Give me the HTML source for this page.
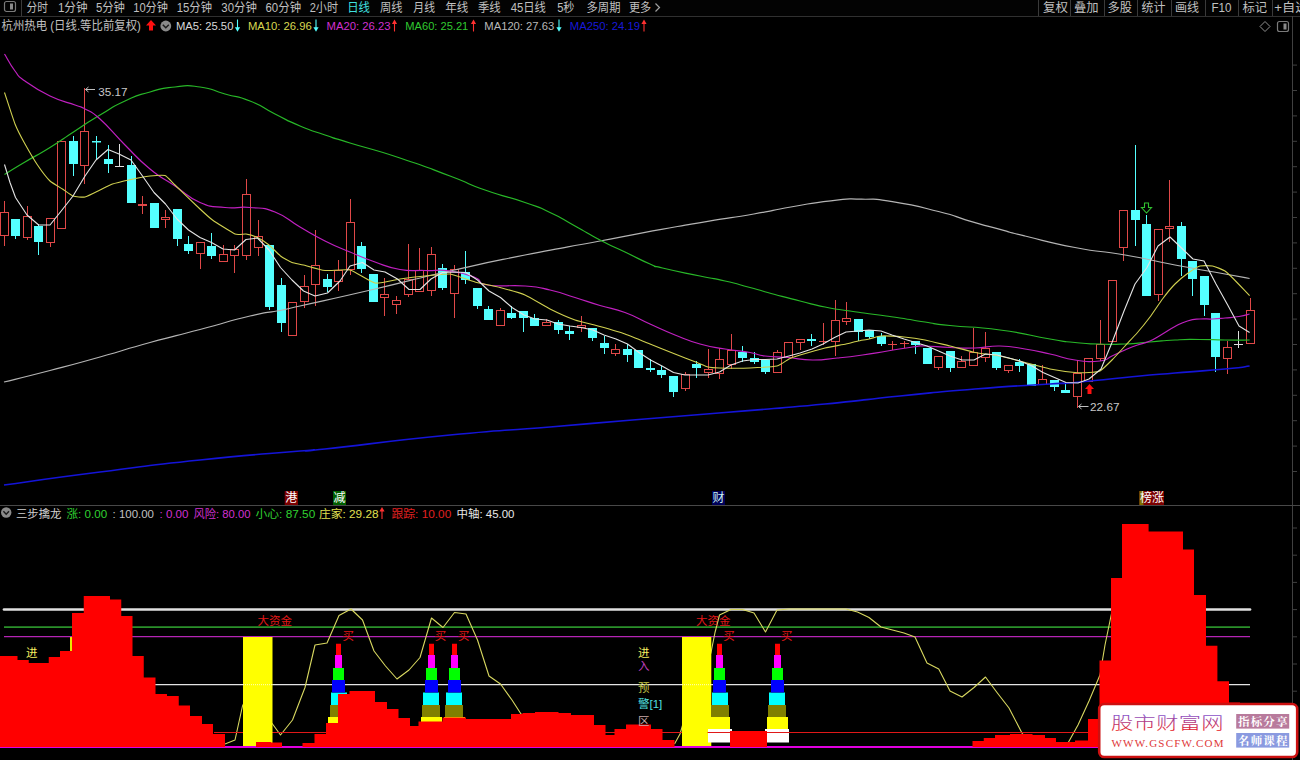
<!DOCTYPE html>
<html lang="zh-CN"><head><meta charset="utf-8"><title>杭州热电 日线</title>
<style>html,body{margin:0;padding:0;background:#000;overflow:hidden}svg{display:block}text{font-family:"Liberation Sans","Noto Sans CJK SC",sans-serif;white-space:pre}</style></head><body>
<svg width="1300" height="760" viewBox="0 0 1300 760">
<defs><linearGradient id="wg" x1="0" y1="0" x2="0" y2="1"><stop offset="0.15" stop-color="#7f58dc"/><stop offset="0.9" stop-color="#ee1414"/></linearGradient></defs>
<rect width="1300" height="760" fill="#000"/>
<rect x="0" y="0" width="1300" height="16" fill="#030303"/>
<path d="M0 16.5H1300" stroke="#303030" stroke-width="1"/>
<path d="M21.5 0V16" stroke="#3a3a3a" stroke-width="1"/>
<rect x="4.5" y="1.5" width="11" height="10" rx="2" fill="none" stroke="#7a7a7a" stroke-width="1.2"/><rect x="10" y="3.5" width="3" height="6" fill="#8a8a8a"/>
<text x="26.5" y="11.7" fill="#c0c0c0" font-size="12"  textLength="21.4" lengthAdjust="spacingAndGlyphs">分时</text>
<text x="57.9" y="11.7" fill="#c0c0c0" font-size="12"  textLength="29.6" lengthAdjust="spacingAndGlyphs">1分钟</text>
<text x="95.9" y="11.7" fill="#c0c0c0" font-size="12"  textLength="29.0" lengthAdjust="spacingAndGlyphs">5分钟</text>
<text x="133.2" y="11.7" fill="#c0c0c0" font-size="12"  textLength="34.8" lengthAdjust="spacingAndGlyphs">10分钟</text>
<text x="176.8" y="11.7" fill="#c0c0c0" font-size="12"  textLength="35.2" lengthAdjust="spacingAndGlyphs">15分钟</text>
<text x="221.3" y="11.7" fill="#c0c0c0" font-size="12"  textLength="35.5" lengthAdjust="spacingAndGlyphs">30分钟</text>
<text x="265.5" y="11.7" fill="#c0c0c0" font-size="12"  textLength="35.6" lengthAdjust="spacingAndGlyphs">60分钟</text>
<text x="309.7" y="11.7" fill="#c0c0c0" font-size="12"  textLength="28.3" lengthAdjust="spacingAndGlyphs">2小时</text>
<text x="347.2" y="11.7" fill="#40e0e0" font-size="12"  textLength="22.8" lengthAdjust="spacingAndGlyphs">日线</text>
<text x="380.0" y="11.7" fill="#c0c0c0" font-size="12"  textLength="22.5" lengthAdjust="spacingAndGlyphs">周线</text>
<text x="413.3" y="11.7" fill="#c0c0c0" font-size="12"  textLength="21.7" lengthAdjust="spacingAndGlyphs">月线</text>
<text x="445.2" y="11.7" fill="#c0c0c0" font-size="12"  textLength="23.1" lengthAdjust="spacingAndGlyphs">年线</text>
<text x="477.9" y="11.7" fill="#c0c0c0" font-size="12"  textLength="22.8" lengthAdjust="spacingAndGlyphs">季线</text>
<text x="510.7" y="11.7" fill="#c0c0c0" font-size="12"  textLength="35.2" lengthAdjust="spacingAndGlyphs">45日线</text>
<text x="557.2" y="11.7" fill="#c0c0c0" font-size="12"  textLength="17.3" lengthAdjust="spacingAndGlyphs">5秒</text>
<text x="586.5" y="11.7" fill="#c0c0c0" font-size="12"  textLength="34.0" lengthAdjust="spacingAndGlyphs">多周期</text>
<text x="628.9" y="11.7" fill="#c0c0c0" font-size="12"  textLength="22.2" lengthAdjust="spacingAndGlyphs">更多</text>
<path d="M655.5 3.5L659.5 7.5L655.5 11.5" fill="none" stroke="#a0a0a0" stroke-width="1.2"/>
<text x="1042.9" y="11.7" fill="#c0c0c0" font-size="12"  textLength="25.0" lengthAdjust="spacingAndGlyphs">复权</text>
<text x="1073.9" y="11.7" fill="#c0c0c0" font-size="12"  textLength="24.6" lengthAdjust="spacingAndGlyphs">叠加</text>
<text x="1107.5" y="11.7" fill="#c0c0c0" font-size="12"  textLength="24.6" lengthAdjust="spacingAndGlyphs">多股</text>
<text x="1141.5" y="11.7" fill="#c0c0c0" font-size="12"  textLength="24.0" lengthAdjust="spacingAndGlyphs">统计</text>
<text x="1175.0" y="11.7" fill="#c0c0c0" font-size="12"  textLength="24.1" lengthAdjust="spacingAndGlyphs">画线</text>
<text x="1211.5" y="11.7" fill="#c0c0c0" font-size="12"  textLength="20.0" lengthAdjust="spacingAndGlyphs">F10</text>
<text x="1242.5" y="11.7" fill="#c0c0c0" font-size="12"  textLength="24.7" lengthAdjust="spacingAndGlyphs">标记</text>
<text x="1274.3" y="11.7" fill="#c0c0c0" font-size="12"  textLength="34.2" lengthAdjust="spacingAndGlyphs">+自选</text>
<path d="M1038.5 0V16" stroke="#3a3a3a" stroke-width="1"/>
<path d="M1070.5 0V16" stroke="#3a3a3a" stroke-width="1"/>
<path d="M1104.5 0V16" stroke="#3a3a3a" stroke-width="1"/>
<path d="M1137.5 0V16" stroke="#3a3a3a" stroke-width="1"/>
<path d="M1171.5 0V16" stroke="#3a3a3a" stroke-width="1"/>
<path d="M1205.5 0V16" stroke="#3a3a3a" stroke-width="1"/>
<path d="M1238.5 0V16" stroke="#3a3a3a" stroke-width="1"/>
<path d="M1272.5 0V16" stroke="#3a3a3a" stroke-width="1"/>
<text x="1.5" y="30.4" fill="#c0c0c0" font-size="12"  textLength="139.4" lengthAdjust="spacingAndGlyphs">杭州热电 (日线.等比前复权)</text>
<path d="M151 20L156 25.5H153V30.5H149V25.5H146Z" fill="#ff1010"/>
<circle cx="165.8" cy="26" r="5.4" fill="#8a8a8a"/><path d="M162.8 24.8L165.8 27.8L168.8 24.8" fill="none" stroke="#1a1a1a" stroke-width="1.4"/>
<text x="175.9" y="29.5" fill="#d8d8d8" font-size="11.5"  textLength="57.5" lengthAdjust="spacingAndGlyphs">MA5: 25.50</text>
<path d="M237.5 19.5V29" fill="none" stroke="#54ffff" stroke-width="1.1"/><path d="M234.9 27.3H240.1L237.5 31.8Z" fill="#54ffff"/>
<text x="247.9" y="29.5" fill="#d8d850" font-size="11.5"  textLength="63.9" lengthAdjust="spacingAndGlyphs">MA10: 26.96</text>
<path d="M316 19.5V29" fill="none" stroke="#54ffff" stroke-width="1.1"/><path d="M313.4 27.3H318.6L316 31.8Z" fill="#54ffff"/>
<text x="326.5" y="29.5" fill="#d030d0" font-size="11.5"  textLength="64.0" lengthAdjust="spacingAndGlyphs">MA20: 26.23</text>
<path d="M394.5 31.5V22" fill="none" stroke="#ff3030" stroke-width="1.1"/><path d="M391.9 24H397.1L394.5 19.5Z" fill="#ff3030"/>
<text x="405.3" y="29.5" fill="#30c830" font-size="11.5"  textLength="63.0" lengthAdjust="spacingAndGlyphs">MA60: 25.21</text>
<path d="M473.5 31.5V22" fill="none" stroke="#ff3030" stroke-width="1.1"/><path d="M470.9 24H476.1L473.5 19.5Z" fill="#ff3030"/>
<text x="484.3" y="29.5" fill="#b8b8b8" font-size="11.5"  textLength="69.9" lengthAdjust="spacingAndGlyphs">MA120: 27.63</text>
<path d="M559 19.5V29" fill="none" stroke="#54ffff" stroke-width="1.1"/><path d="M556.4 27.3H561.6L559 31.8Z" fill="#54ffff"/>
<text x="569.8" y="29.5" fill="#1818d8" font-size="11.5"  textLength="70.2" lengthAdjust="spacingAndGlyphs">MA250: 24.19</text>
<path d="M644 31.5V22" fill="none" stroke="#ff3030" stroke-width="1.1"/><path d="M641.4 24H646.6L644 19.5Z" fill="#ff3030"/>
<path d="M1265 21.5L1270 26.5L1265 31.5L1260 26.5Z" fill="none" stroke="#909090" stroke-width="1"/>
<rect x="1277.5" y="21.5" width="11" height="10" rx="2" fill="none" stroke="#7a7a7a" stroke-width="1.2"/><rect x="1283.5" y="23.5" width="3" height="6" fill="#8a8a8a"/>
<path d="M1292.5 16V760" stroke="#404040" stroke-width="1"/>
<path d="M1292 65.1H1297M1292 90.5H1297M1292 115.9H1297M1292 141.3H1297M1292 166.7H1297M1292 192.1H1297M1292 217.5H1297M1292 242.9H1297M1292 268.3H1297M1292 293.7H1297M1292 319.1H1297M1292 344.5H1297M1292 369.9H1297M1292 395.3H1297M1292 420.7H1297M1292 446.1H1297M1292 471.5H1297M1292 528.0H1297M1292 555.2H1297M1292 582.4H1297M1292 609.6H1297M1292 636.8H1297M1292 664.0H1297M1292 691.2H1297M1292 718.4H1297M1292 745.6H1297" stroke="#404040" stroke-width="1"/>
<path d="M0 505.5H1300" stroke="#484848" stroke-width="1"/>
<path d="M4.5 201V212M4.5 236V246" stroke="#e04848" stroke-width="1"/>
<rect x="0.5" y="212.5" width="8" height="23" fill="#000" stroke="#e04848" stroke-width="1"/>
<path d="M15.5 219V239" stroke="#54ffff" stroke-width="1"/>
<rect x="11" y="219" width="9" height="17" fill="#54ffff"/>
<path d="M27.5 206V216M27.5 238V240" stroke="#e04848" stroke-width="1"/>
<rect x="23.5" y="216.5" width="8" height="21" fill="#000" stroke="#e04848" stroke-width="1"/>
<path d="M38.5 224V255" stroke="#54ffff" stroke-width="1"/>
<rect x="34" y="226" width="9" height="16" fill="#54ffff"/>
<path d="M50.5 243V247" stroke="#e04848" stroke-width="1"/>
<rect x="46.5" y="218.5" width="8" height="24" fill="#000" stroke="#e04848" stroke-width="1"/>
<rect x="57.5" y="141.5" width="8" height="87" fill="#000" stroke="#e04848" stroke-width="1"/>
<path d="M73.5 136V176" stroke="#54ffff" stroke-width="1"/>
<rect x="69" y="141" width="9" height="23" fill="#54ffff"/>
<path d="M84.5 88V131M84.5 166V184" stroke="#e04848" stroke-width="1"/>
<rect x="80.5" y="131.5" width="8" height="34" fill="#000" stroke="#e04848" stroke-width="1"/>
<path d="M96.5 136V159" stroke="#54ffff" stroke-width="1"/>
<rect x="92" y="141" width="9" height="1.5" fill="#54ffff"/>
<path d="M108.5 145V173" stroke="#54ffff" stroke-width="1"/>
<rect x="104" y="159" width="9" height="5" fill="#54ffff"/>
<path d="M119.5 144V166M115 166.5H124" stroke="#e0e0e0" stroke-width="1" fill="none"/>
<path d="M131.5 156V203" stroke="#54ffff" stroke-width="1"/>
<rect x="127" y="165" width="9" height="38" fill="#54ffff"/>
<path d="M142.5 196V204M142.5 206V214" stroke="#e04848" stroke-width="1"/>
<rect x="138.5" y="204.5" width="8" height="1" fill="#000" stroke="#e04848" stroke-width="1"/>
<path d="M154.5 203V228" stroke="#54ffff" stroke-width="1"/>
<rect x="150" y="203" width="9" height="25" fill="#54ffff"/>
<path d="M165.5 210V217M165.5 220V228" stroke="#e04848" stroke-width="1"/>
<rect x="161.5" y="217.5" width="8" height="2" fill="#000" stroke="#e04848" stroke-width="1"/>
<path d="M177.5 209V246" stroke="#54ffff" stroke-width="1"/>
<rect x="173" y="209" width="9" height="30" fill="#54ffff"/>
<path d="M188.5 236V254" stroke="#54ffff" stroke-width="1"/>
<rect x="184" y="244" width="9" height="7" fill="#54ffff"/>
<path d="M200.5 254V269" stroke="#e04848" stroke-width="1"/>
<rect x="196.5" y="242.5" width="8" height="11" fill="#000" stroke="#e04848" stroke-width="1"/>
<path d="M211.5 233V259" stroke="#54ffff" stroke-width="1"/>
<rect x="207" y="246" width="9" height="10" fill="#54ffff"/>
<path d="M223.5 245V254" stroke="#e04848" stroke-width="1"/>
<rect x="219.5" y="254.5" width="8" height="7" fill="#000" stroke="#e04848" stroke-width="1"/>
<path d="M234.5 245V249M234.5 256V273" stroke="#e04848" stroke-width="1"/>
<rect x="230.5" y="249.5" width="8" height="6" fill="#000" stroke="#e04848" stroke-width="1"/>
<path d="M246.5 179V194M246.5 256V260" stroke="#e04848" stroke-width="1"/>
<rect x="242.5" y="194.5" width="8" height="61" fill="#000" stroke="#e04848" stroke-width="1"/>
<path d="M258.5 220V236M258.5 248V256" stroke="#e04848" stroke-width="1"/>
<rect x="254.5" y="236.5" width="8" height="11" fill="#000" stroke="#e04848" stroke-width="1"/>
<path d="M269.5 245V310" stroke="#54ffff" stroke-width="1"/>
<rect x="265" y="245" width="9" height="62" fill="#54ffff"/>
<path d="M281.5 278V332" stroke="#54ffff" stroke-width="1"/>
<rect x="277" y="285" width="9" height="38" fill="#54ffff"/>
<rect x="288.5" y="302.5" width="8" height="33" fill="#000" stroke="#e04848" stroke-width="1"/>
<path d="M304.5 275V286M304.5 302V308" stroke="#e04848" stroke-width="1"/>
<rect x="300.5" y="286.5" width="8" height="15" fill="#000" stroke="#e04848" stroke-width="1"/>
<path d="M315.5 230V265M315.5 285V306" stroke="#e04848" stroke-width="1"/>
<rect x="311.5" y="265.5" width="8" height="19" fill="#000" stroke="#e04848" stroke-width="1"/>
<path d="M327.5 274V292" stroke="#54ffff" stroke-width="1"/>
<rect x="323" y="279" width="9" height="8" fill="#54ffff"/>
<path d="M338.5 260V270M338.5 282V291" stroke="#e04848" stroke-width="1"/>
<rect x="334.5" y="270.5" width="8" height="11" fill="#000" stroke="#e04848" stroke-width="1"/>
<path d="M350.5 199V222M350.5 270V275" stroke="#e04848" stroke-width="1"/>
<rect x="346.5" y="222.5" width="8" height="47" fill="#000" stroke="#e04848" stroke-width="1"/>
<path d="M361.5 242V273" stroke="#54ffff" stroke-width="1"/>
<rect x="357" y="246" width="9" height="23" fill="#54ffff"/>
<path d="M373.5 274V302" stroke="#54ffff" stroke-width="1"/>
<rect x="369" y="274" width="9" height="28" fill="#54ffff"/>
<path d="M384.5 278V294M384.5 298V316" stroke="#e04848" stroke-width="1"/>
<rect x="380.5" y="294.5" width="8" height="3" fill="#000" stroke="#e04848" stroke-width="1"/>
<path d="M396.5 296V300M396.5 305V314" stroke="#e04848" stroke-width="1"/>
<rect x="392.5" y="300.5" width="8" height="4" fill="#000" stroke="#e04848" stroke-width="1"/>
<path d="M408.5 244V279M408.5 295V297" stroke="#e04848" stroke-width="1"/>
<rect x="404.5" y="279.5" width="8" height="15" fill="#000" stroke="#e04848" stroke-width="1"/>
<path d="M419.5 248V270" stroke="#e04848" stroke-width="1"/>
<rect x="415.5" y="270.5" width="8" height="21" fill="#000" stroke="#e04848" stroke-width="1"/>
<path d="M431.5 247V254M431.5 291V296" stroke="#e04848" stroke-width="1"/>
<rect x="427.5" y="254.5" width="8" height="36" fill="#000" stroke="#e04848" stroke-width="1"/>
<path d="M442.5 264V290" stroke="#54ffff" stroke-width="1"/>
<rect x="438" y="268" width="9" height="20" fill="#54ffff"/>
<path d="M454.5 265V269M454.5 294V318" stroke="#e04848" stroke-width="1"/>
<rect x="450.5" y="269.5" width="8" height="24" fill="#000" stroke="#e04848" stroke-width="1"/>
<path d="M465.5 251V284" stroke="#54ffff" stroke-width="1"/>
<rect x="461" y="272" width="9" height="8" fill="#54ffff"/>
<path d="M477.5 288V309" stroke="#54ffff" stroke-width="1"/>
<rect x="473" y="288" width="9" height="18" fill="#54ffff"/>
<path d="M488.5 306V320" stroke="#54ffff" stroke-width="1"/>
<rect x="484" y="309" width="9" height="11" fill="#54ffff"/>
<path d="M500.5 308V310" stroke="#e04848" stroke-width="1"/>
<rect x="496.5" y="310.5" width="8" height="15" fill="#000" stroke="#e04848" stroke-width="1"/>
<path d="M511.5 306V319" stroke="#54ffff" stroke-width="1"/>
<rect x="507" y="313" width="9" height="5" fill="#54ffff"/>
<path d="M523.5 311V332" stroke="#54ffff" stroke-width="1"/>
<rect x="519" y="311" width="9" height="7" fill="#54ffff"/>
<path d="M534.5 314V326" stroke="#54ffff" stroke-width="1"/>
<rect x="530" y="318" width="9" height="8" fill="#54ffff"/>
<path d="M546.5 319V322" stroke="#e04848" stroke-width="1"/>
<rect x="542.5" y="322.5" width="8" height="3" fill="#000" stroke="#e04848" stroke-width="1"/>
<path d="M558.5 320V334" stroke="#54ffff" stroke-width="1"/>
<rect x="554" y="322" width="9" height="8" fill="#54ffff"/>
<path d="M569.5 326V340" stroke="#54ffff" stroke-width="1"/>
<rect x="565" y="331" width="9" height="3" fill="#54ffff"/>
<path d="M581.5 316V325M581.5 328V332" stroke="#e04848" stroke-width="1"/>
<rect x="577.5" y="325.5" width="8" height="2" fill="#000" stroke="#e04848" stroke-width="1"/>
<path d="M592.5 328V341" stroke="#54ffff" stroke-width="1"/>
<rect x="588" y="328" width="9" height="10" fill="#54ffff"/>
<path d="M604.5 336V354" stroke="#54ffff" stroke-width="1"/>
<rect x="600" y="343" width="9" height="5" fill="#54ffff"/>
<path d="M615.5 344V349M615.5 354V356" stroke="#e04848" stroke-width="1"/>
<rect x="611.5" y="349.5" width="8" height="4" fill="#000" stroke="#e04848" stroke-width="1"/>
<path d="M627.5 344V362" stroke="#54ffff" stroke-width="1"/>
<rect x="623" y="349" width="9" height="6" fill="#54ffff"/>
<path d="M638.5 350V368" stroke="#54ffff" stroke-width="1"/>
<rect x="634" y="350" width="9" height="18" fill="#54ffff"/>
<path d="M650.5 359V372" stroke="#54ffff" stroke-width="1"/>
<rect x="646" y="368" width="9" height="2" fill="#54ffff"/>
<path d="M661.5 366V378" stroke="#54ffff" stroke-width="1"/>
<rect x="657" y="370" width="9" height="5" fill="#54ffff"/>
<path d="M673.5 376V397" stroke="#54ffff" stroke-width="1"/>
<rect x="669" y="376" width="9" height="16" fill="#54ffff"/>
<path d="M685.5 372V374M685.5 389V391" stroke="#e04848" stroke-width="1"/>
<rect x="681.5" y="374.5" width="8" height="14" fill="#000" stroke="#e04848" stroke-width="1"/>
<path d="M696.5 361V378" stroke="#54ffff" stroke-width="1"/>
<rect x="692" y="364" width="9" height="4" fill="#54ffff"/>
<path d="M708.5 349V369M708.5 373V378" stroke="#e04848" stroke-width="1"/>
<rect x="704.5" y="369.5" width="8" height="3" fill="#000" stroke="#e04848" stroke-width="1"/>
<path d="M719.5 348V359M719.5 374V379" stroke="#e04848" stroke-width="1"/>
<rect x="715.5" y="359.5" width="8" height="14" fill="#000" stroke="#e04848" stroke-width="1"/>
<path d="M731.5 334V350M731.5 365V369" stroke="#e04848" stroke-width="1"/>
<rect x="727.5" y="350.5" width="8" height="14" fill="#000" stroke="#e04848" stroke-width="1"/>
<path d="M742.5 346V362" stroke="#54ffff" stroke-width="1"/>
<rect x="738" y="352" width="9" height="6" fill="#54ffff"/>
<path d="M754.5 352V364" stroke="#54ffff" stroke-width="1"/>
<rect x="750" y="358" width="9" height="4" fill="#54ffff"/>
<path d="M765.5 360V374" stroke="#54ffff" stroke-width="1"/>
<rect x="761" y="360" width="9" height="12" fill="#54ffff"/>
<path d="M777.5 350V352" stroke="#e04848" stroke-width="1"/>
<rect x="773.5" y="352.5" width="8" height="20" fill="#000" stroke="#e04848" stroke-width="1"/>
<rect x="784.5" y="342.5" width="8" height="15" fill="#000" stroke="#e04848" stroke-width="1"/>
<path d="M800.5 343V350" stroke="#e04848" stroke-width="1"/>
<rect x="796.5" y="339.5" width="8" height="3" fill="#000" stroke="#e04848" stroke-width="1"/>
<path d="M811.5 334V346" stroke="#54ffff" stroke-width="1"/>
<rect x="807" y="339" width="9" height="2" fill="#54ffff"/>
<path d="M823.5 323V345M819 341.5H828" stroke="#e04848" stroke-width="1" fill="none"/>
<path d="M835.5 300V320M835.5 342V356" stroke="#e04848" stroke-width="1"/>
<rect x="831.5" y="320.5" width="8" height="21" fill="#000" stroke="#e04848" stroke-width="1"/>
<path d="M846.5 302V318M846.5 322V325" stroke="#e04848" stroke-width="1"/>
<rect x="842.5" y="318.5" width="8" height="3" fill="#000" stroke="#e04848" stroke-width="1"/>
<path d="M858.5 319V341" stroke="#54ffff" stroke-width="1"/>
<rect x="854" y="319" width="9" height="13" fill="#54ffff"/>
<path d="M869.5 330V339" stroke="#54ffff" stroke-width="1"/>
<rect x="865" y="330" width="9" height="7" fill="#54ffff"/>
<path d="M881.5 333V346" stroke="#54ffff" stroke-width="1"/>
<rect x="877" y="336" width="9" height="8" fill="#54ffff"/>
<path d="M892.5 341V350M888 344.5H897" stroke="#e04848" stroke-width="1" fill="none"/>
<path d="M904.5 341V348M900 343.5H909" stroke="#e04848" stroke-width="1" fill="none"/>
<path d="M915.5 341V354" stroke="#54ffff" stroke-width="1"/>
<rect x="911" y="341" width="9" height="4" fill="#54ffff"/>
<path d="M927.5 348V364" stroke="#54ffff" stroke-width="1"/>
<rect x="923" y="348" width="9" height="16" fill="#54ffff"/>
<path d="M938.5 368V370" stroke="#e04848" stroke-width="1"/>
<rect x="934.5" y="356.5" width="8" height="11" fill="#000" stroke="#e04848" stroke-width="1"/>
<path d="M950.5 351V372" stroke="#54ffff" stroke-width="1"/>
<rect x="946" y="351" width="9" height="17" fill="#54ffff"/>
<path d="M961.5 356V361" stroke="#e04848" stroke-width="1"/>
<rect x="957.5" y="361.5" width="8" height="6" fill="#000" stroke="#e04848" stroke-width="1"/>
<path d="M973.5 328V352" stroke="#e04848" stroke-width="1"/>
<rect x="969.5" y="352.5" width="8" height="13" fill="#000" stroke="#e04848" stroke-width="1"/>
<path d="M985.5 332V348M985.5 358V362" stroke="#e04848" stroke-width="1"/>
<rect x="981.5" y="348.5" width="8" height="9" fill="#000" stroke="#e04848" stroke-width="1"/>
<path d="M996.5 352V370" stroke="#54ffff" stroke-width="1"/>
<rect x="992" y="352" width="9" height="16" fill="#54ffff"/>
<path d="M1008.5 371V373" stroke="#e04848" stroke-width="1"/>
<rect x="1004.5" y="365.5" width="8" height="5" fill="#000" stroke="#e04848" stroke-width="1"/>
<path d="M1019.5 359V372" stroke="#54ffff" stroke-width="1"/>
<rect x="1015" y="362" width="9" height="4" fill="#54ffff"/>
<path d="M1031.5 364V386" stroke="#54ffff" stroke-width="1"/>
<rect x="1027" y="364" width="9" height="22" fill="#54ffff"/>
<path d="M1042.5 365V379" stroke="#e04848" stroke-width="1"/>
<rect x="1038.5" y="379.5" width="8" height="5" fill="#000" stroke="#e04848" stroke-width="1"/>
<path d="M1054.5 380V391" stroke="#54ffff" stroke-width="1"/>
<rect x="1050" y="380" width="9" height="7" fill="#54ffff"/>
<path d="M1065.5 384V393" stroke="#54ffff" stroke-width="1"/>
<rect x="1061" y="390" width="9" height="3" fill="#54ffff"/>
<path d="M1077.5 360V373M1077.5 397V408" stroke="#e04848" stroke-width="1"/>
<rect x="1073.5" y="373.5" width="8" height="23" fill="#000" stroke="#e04848" stroke-width="1"/>
<rect x="1084.5" y="358.5" width="8" height="23" fill="#000" stroke="#e04848" stroke-width="1"/>
<path d="M1100.5 320V344M1100.5 359V361" stroke="#e04848" stroke-width="1"/>
<rect x="1096.5" y="344.5" width="8" height="14" fill="#000" stroke="#e04848" stroke-width="1"/>
<rect x="1108.5" y="280.5" width="8" height="61" fill="#000" stroke="#e04848" stroke-width="1"/>
<path d="M1123.5 248V261" stroke="#e04848" stroke-width="1"/>
<rect x="1119.5" y="210.5" width="8" height="37" fill="#000" stroke="#e04848" stroke-width="1"/>
<path d="M1135.5 145V246" stroke="#54ffff" stroke-width="1"/>
<rect x="1131" y="210" width="9" height="10" fill="#54ffff"/>
<path d="M1146.5 215V296" stroke="#54ffff" stroke-width="1"/>
<rect x="1142" y="224" width="9" height="72" fill="#54ffff"/>
<path d="M1158.5 295V301" stroke="#e04848" stroke-width="1"/>
<rect x="1154.5" y="229.5" width="8" height="65" fill="#000" stroke="#e04848" stroke-width="1"/>
<path d="M1169.5 180V226M1169.5 229V242" stroke="#e04848" stroke-width="1"/>
<rect x="1165.5" y="226.5" width="8" height="2" fill="#000" stroke="#e04848" stroke-width="1"/>
<path d="M1181.5 222V276" stroke="#54ffff" stroke-width="1"/>
<rect x="1177" y="226" width="9" height="33" fill="#54ffff"/>
<path d="M1192.5 261V296" stroke="#54ffff" stroke-width="1"/>
<rect x="1188" y="261" width="9" height="18" fill="#54ffff"/>
<path d="M1204.5 276V316" stroke="#54ffff" stroke-width="1"/>
<rect x="1200" y="276" width="9" height="29" fill="#54ffff"/>
<path d="M1215.5 313V372" stroke="#54ffff" stroke-width="1"/>
<rect x="1211" y="313" width="9" height="44" fill="#54ffff"/>
<path d="M1227.5 341V347M1227.5 359V374" stroke="#e04848" stroke-width="1"/>
<rect x="1223.5" y="347.5" width="8" height="11" fill="#000" stroke="#e04848" stroke-width="1"/>
<path d="M1238.5 331V348M1234 344.5H1243" stroke="#e0e0e0" stroke-width="1" fill="none"/>
<path d="M1250.5 298V310" stroke="#e04848" stroke-width="1"/>
<rect x="1246.5" y="310.5" width="8" height="33" fill="#000" stroke="#e04848" stroke-width="1"/>
<path d="M4 485C36.0 480.7 34.7 480.3 100 472C165.3 463.7 133.3 467.0 200 460C266.7 453.0 258.3 454.7 300 451C341.7 447.3 275.0 454.3 325 449C375.0 443.7 375.0 442.3 450 435C525.0 427.7 489.2 432.0 550 427C610.8 422.0 574.2 424.8 632.5 420C690.8 415.2 660.8 417.8 725 412.5C789.2 407.2 766.7 409.5 825 404C883.3 398.5 850.0 401.0 900 396C950.0 391.0 925.0 393.0 975 389C1025.0 385.0 1016.7 386.2 1050 384C1083.3 381.8 1050.0 384.7 1075 382.5C1100.0 380.3 1091.7 380.7 1125 377.5C1158.3 374.3 1141.7 375.8 1175 373C1208.3 370.2 1200.1 371.3 1225 369C1249.9 366.7 1241.4 367.0 1249.6 366" fill="none" stroke="#1414d8" stroke-width="1.6" stroke-linejoin="round"/>
<path d="M4 382C19.3 378.2 18.0 378.8 50 370.5C82.0 362.2 66.7 366.3 100 357C133.3 347.7 116.7 351.7 150 342.5C183.3 333.3 166.7 338.3 200 329.5C233.3 320.7 223.3 322.3 250 316C276.7 309.7 263.3 313.8 280 310.5C296.7 307.2 268.3 313.2 300 306C331.7 298.8 325.0 300.7 375 289C425.0 277.3 400.0 282.3 450 271C500.0 259.7 475.0 265.0 525 255C575.0 245.0 554.5 249.5 600 241C645.5 232.5 625.6 235.9 661.5 229.4C697.4 222.9 676.9 226.5 707.7 221.4C738.5 216.3 726.1 218.8 753.8 214C781.5 209.2 765.1 211.4 790.8 207C816.5 202.6 807.2 203.4 830.8 200.8C854.4 198.2 841.0 198.9 861.5 199.2C882.0 199.5 866.6 197.6 892.3 201.7C918.0 205.8 912.9 205.1 938.5 211.5C964.1 217.9 948.5 214.8 969 220.8C989.5 226.8 981.3 224.3 1000 229.4C1018.7 234.5 1000.0 230.0 1025 236C1050.0 242.0 1041.7 241.2 1075 247.5C1108.3 253.8 1091.7 249.2 1125 255C1158.3 260.8 1141.7 258.7 1175 265C1208.3 271.3 1200.1 269.5 1225 274C1249.9 278.5 1241.4 277.0 1249.6 278.5" fill="none" stroke="#b4b4b4" stroke-width="1.2" stroke-linejoin="round"/>
<path d="M4.5 174.5C11.3 170.3 9.8 171.0 25 162C40.2 153.0 33.3 157.8 50 147.5C66.7 137.2 58.3 141.8 75 131C91.7 120.2 83.3 125.0 100 115C116.7 105.0 108.3 108.7 125 101C141.7 93.3 133.3 96.7 150 92C166.7 87.3 158.3 88.7 175 87C191.7 85.3 183.3 84.7 200 87C216.7 89.3 208.3 89.3 225 94C241.7 98.7 233.3 94.3 250 101C266.7 107.7 258.3 105.7 275 114C291.7 122.3 283.3 119.0 300 126C316.7 133.0 308.3 129.3 325 135C341.7 140.7 325.0 135.3 350 143C375.0 150.7 366.7 147.0 400 158C433.3 169.0 421.7 165.3 450 176C478.3 186.7 460.0 181.2 485 190C510.0 198.8 503.3 195.0 525 202.5C546.7 210.0 533.3 204.7 550 212.5C566.7 220.3 558.3 216.8 575 226C591.7 235.2 583.3 231.3 600 240C616.7 248.7 608.3 244.0 625 252C641.7 260.0 637.5 258.7 650 264C662.5 269.3 645.8 264.0 662.5 268C679.2 272.0 679.2 271.7 700 276C720.8 280.3 708.3 277.2 725 281C741.7 284.8 733.3 283.0 750 287.5C766.7 292.0 758.3 290.0 775 294.5C791.7 299.0 783.3 296.8 800 301C816.7 305.2 808.3 303.7 825 307C841.7 310.3 833.3 308.5 850 311C866.7 313.5 858.3 312.2 875 314.5C891.7 316.8 883.3 315.5 900 318C916.7 320.5 908.3 319.5 925 322C941.7 324.5 925.0 322.8 950 325.5C975.0 328.2 966.7 325.5 1000 330C1033.3 334.5 1025.0 334.8 1050 339C1075.0 343.2 1058.3 340.8 1075 342.5C1091.7 344.2 1083.3 343.5 1100 344C1116.7 344.5 1108.3 344.7 1125 344C1141.7 343.3 1133.3 343.3 1150 342C1166.7 340.7 1158.3 340.8 1175 340C1191.7 339.2 1183.3 339.5 1200 339.5C1216.7 339.5 1208.5 339.8 1225 340C1241.5 340.2 1241.4 340.0 1249.6 340" fill="none" stroke="#28b828" stroke-width="1.2" stroke-linejoin="round"/>
<path d="M4.5 54C7.3 58.5 9.5 63.8 15 71C20.5 78.2 15.7 74.3 25 81C34.3 87.7 36.7 89.6 50 96C63.3 102.4 65.7 101.5 75 105C84.3 108.5 78.3 105.3 85 109C91.7 112.7 89.3 109.4 100 119C110.7 128.6 111.7 131.7 125 145C138.3 158.3 136.7 158.1 150 169C163.3 179.9 161.7 177.1 175 186C188.3 194.9 186.7 196.8 200 202.5C213.3 208.2 211.7 206.2 225 207.5C238.3 208.8 236.7 206.3 250 207.5C263.3 208.7 261.7 206.8 275 212C288.3 217.2 286.7 219.3 300 227C313.3 234.7 311.7 234.3 325 241C338.3 247.7 336.7 246.4 350 252C363.3 257.6 361.7 257.3 375 262C388.3 266.7 386.7 267.2 400 269.5C413.3 271.8 411.7 270.1 425 270.5C438.3 270.9 436.7 269.1 450 271C463.3 272.9 465.0 273.8 475 277.5C485.0 281.2 474.2 282.7 487.5 285C500.8 287.3 508.3 284.7 525 286C541.7 287.3 536.7 286.9 550 290C563.3 293.1 561.7 293.4 575 297.5C588.3 301.6 586.7 301.5 600 305.5C613.3 309.5 611.7 307.6 625 312.5C638.3 317.4 636.7 318.0 650 324C663.3 330.0 661.7 329.7 675 335C688.3 340.3 686.7 340.3 700 344C713.3 347.7 711.7 346.7 725 349C738.3 351.3 739.3 350.6 750 352.5C760.7 354.4 755.0 354.7 765 356C775.0 357.3 774.8 356.4 787.5 357.5C800.2 358.6 799.2 359.9 812.5 360C825.8 360.1 824.2 359.3 837.5 358C850.8 356.7 849.2 356.9 862.5 355C875.8 353.1 874.2 353.1 887.5 351C900.8 348.9 902.5 348.3 912.5 347C922.5 345.7 915.0 345.9 925 346C935.0 346.1 936.7 347.0 950 347.5C963.3 348.0 961.7 348.4 975 348C988.3 347.6 986.7 345.7 1000 346C1013.3 346.3 1011.7 346.9 1025 349C1038.3 351.1 1036.7 351.1 1050 354C1063.3 356.9 1061.7 358.1 1075 360C1088.3 361.9 1090.1 362.1 1100 361C1109.9 359.9 1105.3 358.9 1112 356C1118.7 353.1 1118.2 352.9 1125 350C1131.8 347.1 1130.8 347.4 1137.5 345C1144.2 342.6 1143.3 343.9 1150 341C1156.7 338.1 1155.8 337.9 1162.5 334C1169.2 330.1 1168.3 330.0 1175 326.5C1181.7 323.0 1180.8 323.0 1187.5 321C1194.2 319.0 1193.3 319.5 1200 319C1206.7 318.5 1205.8 319.3 1212.5 319C1219.2 318.7 1217.9 318.7 1225 318C1232.1 317.3 1232.4 317.6 1239 316.5C1245.6 315.4 1246.8 314.7 1249.6 314" fill="none" stroke="#c020c0" stroke-width="1.2" stroke-linejoin="round"/>
<path d="M4.5 92.5C5.4 95.1 13.3 119.7 15 124C16.7 128.3 23.1 140.6 25 144C26.9 147.4 35.4 161.9 37.5 165C39.6 168.1 47.9 179.0 50 181C52.1 183.0 60.6 187.8 62.5 189C64.4 190.2 71.1 195.3 73 196C74.9 196.7 82.8 197.5 85 197C87.2 196.5 97.7 191.1 100 190C102.3 188.9 109.9 184.9 112.5 184C115.1 183.1 127.9 180.2 131 179.5C134.1 178.8 147.2 176.3 150 176C152.8 175.7 162.9 174.8 165 175.5C167.1 176.2 172.1 182.2 175 185C177.9 187.8 196.9 206.1 200 209C203.1 211.9 209.6 217.9 212.5 220C215.4 222.1 232.2 232.8 235 234C237.8 235.2 244.1 233.7 246 234C247.9 234.3 255.6 236.6 257.5 237.5C259.4 238.4 267.1 243.5 269 245C270.9 246.5 278.6 254.5 280.5 256C282.4 257.5 290.1 261.8 292 262.5C293.9 263.2 300.8 264.3 303.5 265C306.2 265.7 321.1 270.1 325 270.5C328.9 270.9 345.8 269.0 350 270C354.2 271.0 370.8 282.2 375 283C379.2 283.8 395.8 279.6 400 279C404.2 278.4 420.8 276.4 425 276C429.2 275.6 445.8 273.5 450 274C454.2 274.5 470.8 280.9 475 282C479.2 283.1 495.8 286.4 500 287.5C504.2 288.6 520.8 293.2 525 295C529.2 296.8 545.8 306.9 550 309C554.2 311.1 570.8 318.5 575 320C579.2 321.5 595.8 325.3 600 326.5C604.2 327.7 620.8 332.5 625 334C629.2 335.5 645.8 342.3 650 344C654.2 345.7 671.1 352.5 675 354C678.9 355.5 694.2 361.4 697 362.5C699.8 363.6 706.1 366.5 708 367C709.9 367.5 716.0 367.9 719.5 368C723.0 368.1 745.2 368.2 750 368C754.8 367.8 773.8 366.8 777 366C780.2 365.2 787.1 359.9 789 359C790.9 358.1 797.0 355.9 800 355C803.0 354.1 821.2 348.9 825 348C828.8 347.1 843.2 344.6 846 344C848.8 343.4 856.1 341.4 858 341C859.9 340.6 867.1 339.4 869 339C870.9 338.6 878.1 336.2 881 336C883.9 335.8 900.3 336.7 904 337C907.7 337.3 921.2 339.2 925 340C928.8 340.8 945.8 345.0 950 346C954.2 347.0 970.8 351.7 975 352.5C979.2 353.3 995.8 355.2 1000 356C1004.2 356.8 1020.8 361.4 1025 362.5C1029.2 363.6 1045.8 368.2 1050 369C1054.2 369.8 1071.8 372.2 1075 372.5C1078.2 372.8 1086.9 372.6 1089 372.5C1091.1 372.4 1098.1 372.0 1100 371C1101.9 370.0 1109.9 362.1 1112 360C1114.1 357.9 1122.9 348.3 1125 346C1127.1 343.7 1135.4 334.9 1137.5 332.5C1139.6 330.1 1147.9 319.8 1150 317C1152.1 314.2 1160.4 301.8 1162.5 299C1164.6 296.2 1172.9 286.1 1175 284C1177.1 281.9 1185.4 275.0 1187.5 273.5C1189.6 272.0 1197.9 266.6 1200 266C1202.1 265.4 1210.4 265.6 1212.5 266C1214.6 266.4 1222.9 269.6 1225 271C1227.1 272.4 1235.5 280.9 1237.5 283C1239.5 285.1 1248.6 294.6 1249.6 295.7" fill="none" stroke="#d0d050" stroke-width="1.1" stroke-linejoin="round"/>
<polyline points="4.5,164.5 10,182.5 15.5,197.5 27,215 38.7,225 50,225 62,210 73,196 85,176 96,160 108,149.5 119,154 131,160 142.5,176 154,192.5 165.5,204 177,219 188.5,230 200,237.5 211.5,242.5 223,249 234.5,250 246,239.5 257.5,238 269,250 280.5,267.5 292,280 303.5,291 315,296 327.5,293 340,281 350,266 362.5,262.5 374,270 385,272 397.5,279 409,289.5 420,289.5 431,279 442.5,272.5 455,272 466,272.5 477.5,280 489,291 500.5,297.5 512,307.5 524,315 535,319 547,320 558,324 570,326 581,327.5 593,330 604,335 616,339 627.5,344 639,352.5 650.5,360 662,366 673.5,372.5 685,375 697,375 708,375 719.5,372 731,365 742.5,361 754,359.5 765.5,359.5 777,359 789,356 800,353 812,349 823,344 834.5,337.5 846,332 858,331 869,330 881,331 892,335 904,339 915.5,342.5 927,346 938.5,351 950,356 962,360 974,360 985.5,354 997,355 1009,358 1020,361 1032,366 1043,372.5 1054.5,377.5 1066,382.5 1078,383 1089,379 1101,369 1112,342.5 1124,311 1135,284 1147,267.5 1158,246 1170,237 1181,247.5 1193,259 1204,261 1216,284 1227.7,305 1239,326 1249.6,332.5" fill="none" stroke="#e4e4e4" stroke-width="1.1" stroke-linejoin="round" />
<path d="M85.5 89.5H95M85.5 89.5L88.5 87M85.5 89.5L88.5 92" stroke="#c0c0c0" stroke-width="1" fill="none"/>
<text x="98.3" y="95.5" fill="#c8c8c8" font-size="11.5"  textLength="29.2" lengthAdjust="spacingAndGlyphs">35.17</text>
<path d="M1078.5 406.5H1088.5M1078.5 406.5L1081.5 404M1078.5 406.5L1081.5 409" stroke="#c0c0c0" stroke-width="1" fill="none"/>
<text x="1090.0" y="410.5" fill="#c8c8c8" font-size="11.5"  textLength="29.5" lengthAdjust="spacingAndGlyphs">22.67</text>
<path d="M1089.5 384L1094 389H1091.5V394H1087.5V389H1085Z" fill="#ff1010"/>
<path d="M1144.5 203H1148.5V207.5H1151.5L1146.5 213L1141.5 207.5H1144.5Z" fill="none" stroke="#30c030" stroke-width="1.1"/>
<rect x="284.7" y="491" width="13.3" height="14" fill="#7c0000"/><text x="285.2" y="502.3" fill="#fff" font-size="12" >港</text>
<rect x="333" y="491" width="13" height="14" fill="#005e00"/><text x="333.5" y="502.3" fill="#fff" font-size="12" >减</text>
<rect x="712" y="491" width="13" height="14" fill="#000058"/><text x="712.5" y="502.3" fill="#c8f0f0" font-size="12" >财</text>
<rect x="1139.4" y="491" width="24.6" height="14" fill="#7c0000"/><rect x="1139.4" y="491" width="4" height="14" fill="#807000"/><text x="1140" y="502.3" fill="#fff" font-size="12" >榜涨</text>
<circle cx="6.2" cy="512.5" r="5.2" fill="#8a8a8a"/><path d="M3.4 511.3L6.2 514.2L9 511.3" fill="none" stroke="#1a1a1a" stroke-width="1.4"/>
<text x="16.0" y="517.5" fill="#d0d0d0" font-size="11.5"  textLength="45.5" lengthAdjust="spacingAndGlyphs">三步擒龙</text>
<text x="66.5" y="517.5" fill="#30d030" font-size="11.5"  textLength="40.6" lengthAdjust="spacingAndGlyphs">涨: 0.00</text>
<text x="112.5" y="517.5" fill="#c0c0c0" font-size="11.5"  textLength="41.5" lengthAdjust="spacingAndGlyphs">: 100.00</text>
<text x="159.5" y="517.5" fill="#d030d0" font-size="11.5"  textLength="29.0" lengthAdjust="spacingAndGlyphs">: 0.00</text>
<text x="193.5" y="517.5" fill="#d030d0" font-size="11.5"  textLength="57.0" lengthAdjust="spacingAndGlyphs">风险: 80.00</text>
<text x="255.5" y="517.5" fill="#30d030" font-size="11.5"  textLength="59.7" lengthAdjust="spacingAndGlyphs">小心: 87.50</text>
<text x="319.0" y="517.5" fill="#e0e050" font-size="11.5"  textLength="59.5" lengthAdjust="spacingAndGlyphs">庄家: 29.28</text>
<path d="M382 519V509.5" fill="none" stroke="#ff3030" stroke-width="1.1"/><path d="M379.4 511.5H384.6L382 507Z" fill="#ff3030"/>
<text x="391.5" y="517.5" fill="#e02020" font-size="11.5"  textLength="59.7" lengthAdjust="spacingAndGlyphs">跟踪: 10.00</text>
<text x="456.5" y="517.5" fill="#e8e8e8" font-size="11.5"  textLength="58.0" lengthAdjust="spacingAndGlyphs">中轴: 45.00</text>
<path d="M4 609.5H1250" stroke="#e0e0e0" stroke-width="2.7" stroke-linecap="round"/>
<path d="M4 627.2H1250" stroke="#2a902a" stroke-width="1.7"/>
<path d="M4 636.7H1250" stroke="#b424b4" stroke-width="1.2"/>
<path d="M4 684.7H1250" stroke="#e4e4e4" stroke-width="1.3"/>
<polyline points="225,744 235,740 242.5,706 250,690 258,705 272.5,724 280.5,735 292.5,720 305,687.5 315,645 327,643 339,615.5 351,609 362.5,620 374,651 385.5,666 397,679 409,670 420,657.5 431.5,618 443,627.5 454.5,612.5 466,614 477.5,640 489,676 500.5,684 512,700 521,714 530,722" fill="none" stroke="#d8d860" stroke-width="1.1" stroke-linejoin="round" />
<polyline points="674.5,744 680,734 690,700 705,670 711,652.5 715,632.5 719.5,615 731,609.5 742.5,609.5 754,613 765.5,632 777,610 789,609 846,609 857.5,612 869,617.5 881,627 892.5,630 904,633 915,637 927,663 938.75,669 950,691 962,697 974,687.5 985.5,677 997,692.5 1009,708 1022.5,734 1035,742" fill="none" stroke="#d8d860" stroke-width="1.1" stroke-linejoin="round" />
<polyline points="1068,743 1078,725 1089,701 1100,675 1105,645 1111,616 1115,596" fill="none" stroke="#d8d860" stroke-width="1.1" stroke-linejoin="round" />
<path d="M214 732.5H1250" stroke="#e01818" stroke-width="1.2"/>
<rect x="70" y="637" width="2" height="14" fill="#e8e800"/>
<rect x="243" y="637" width="29.5" height="110" fill="#ffff00"/>
<rect x="682" y="637" width="29.3" height="110" fill="#ffff00"/>
<path d="M243 684.7H272.5M682 684.7H711" stroke="#ffffc0" stroke-width="1" stroke-dasharray="1 1"/>
<rect x="327" y="729" width="24" height="13.5" fill="#ffffff"/><rect x="328" y="717" width="21" height="12" fill="#ffff00"/><rect x="330" y="705" width="18" height="12" fill="#808000"/><rect x="331" y="692.5" width="16" height="12.5" fill="#00ffff"/><rect x="332" y="680" width="13" height="12.5" fill="#0000ff"/><rect x="333" y="668" width="11" height="12" fill="#00ff00"/><rect x="335" y="655" width="7" height="13" fill="#ff00ff"/><rect x="336" y="643.75" width="5" height="11.25" fill="#ff0000"/>
<rect x="419" y="729" width="24" height="13.5" fill="#ffffff"/><rect x="421" y="717" width="21" height="12" fill="#ffff00"/><rect x="422" y="705" width="18" height="12" fill="#808000"/><rect x="423" y="692.5" width="16" height="12.5" fill="#00ffff"/><rect x="425" y="680" width="13" height="12.5" fill="#0000ff"/><rect x="426" y="668" width="11" height="12" fill="#00ff00"/><rect x="428" y="655" width="7" height="13" fill="#ff00ff"/><rect x="429" y="643.75" width="5" height="11.25" fill="#ff0000"/>
<rect x="442" y="729" width="24" height="13.5" fill="#ffffff"/><rect x="444" y="717" width="21" height="12" fill="#ffff00"/><rect x="445" y="705" width="18" height="12" fill="#808000"/><rect x="446" y="692.5" width="16" height="12.5" fill="#00ffff"/><rect x="448" y="680" width="13" height="12.5" fill="#0000ff"/><rect x="449" y="668" width="11" height="12" fill="#00ff00"/><rect x="451" y="655" width="7" height="13" fill="#ff00ff"/><rect x="452" y="643.75" width="5" height="11.25" fill="#ff0000"/>
<rect x="708" y="729" width="24" height="13.5" fill="#ffffff"/><rect x="709" y="717" width="21" height="12" fill="#ffff00"/><rect x="711" y="705" width="18" height="12" fill="#808000"/><rect x="712" y="692.5" width="16" height="12.5" fill="#00ffff"/><rect x="713" y="680" width="13" height="12.5" fill="#0000ff"/><rect x="714" y="668" width="11" height="12" fill="#00ff00"/><rect x="716" y="655" width="7" height="13" fill="#ff00ff"/><rect x="717" y="643.75" width="5" height="11.25" fill="#ff0000"/>
<rect x="765" y="729" width="24" height="13.5" fill="#ffffff"/><rect x="767" y="717" width="21" height="12" fill="#ffff00"/><rect x="768" y="705" width="18" height="12" fill="#808000"/><rect x="769" y="692.5" width="16" height="12.5" fill="#00ffff"/><rect x="771" y="680" width="13" height="12.5" fill="#0000ff"/><rect x="772" y="668" width="11" height="12" fill="#00ff00"/><rect x="774" y="655" width="7" height="13" fill="#ff00ff"/><rect x="775" y="643.75" width="5" height="11.25" fill="#ff0000"/>
<path d="M707.5 732.5H731.5M765 732.5H789" stroke="#e01818" stroke-width="1.2"/>
<path d="M0 747H1250" stroke="#e000e0" stroke-width="2"/>
<path d="M0 746.9V656H17.5V660H28.75V663H48.75V657H60V651H72V613H83.75V596H110V599.5H121.25V616H132.5V656H143.75V677.5H155.5V694H167V696H178.75V705.5H190V716H202V724H213V734H225V746.9H256V742H271V742.5H282V746.9H302.5V743H314.5V734H326V723H338V694H349.5V691H375V702H387V709H398.5V718H410V726H418.5V721.5H442.5V717.5H466V719H511V714H522.5V713H535V712H558.5V713H571V715H594V725H605.5V735H614.5V729H626V724.5H651V729H662.5V740H674.5V746.9H730V731H767V746.9H972.5V741H983.75V738H995V735H1010V734H1032.5V735H1045V738H1056V742H1075V740.5H1088V719H1099.5V660.5H1111V578H1122V524H1148.6V531.4H1183V549.6H1194V595H1206V645.7H1217.4V681.3H1229V702.4H1240V746.9H1240V746.9Z" fill="#ff0000"/>
<text x="26" y="656.5" fill="#f8f060" font-size="11.5" >进</text>
<text x="257.5" y="625" fill="#e01818" font-size="11.5" >大资金</text>
<text x="696" y="625" fill="#e01818" font-size="11.5" >大资金</text>
<text x="342.5" y="640.3" fill="#e01818" font-size="11.5" >买</text>
<text x="434.8" y="640.3" fill="#e01818" font-size="11.5" >买</text>
<text x="457.9" y="640.3" fill="#e01818" font-size="11.5" >买</text>
<text x="723.3" y="640.3" fill="#e01818" font-size="11.5" >买</text>
<text x="781.0" y="640.3" fill="#e01818" font-size="11.5" >买</text>
<text x="638" y="656.5" fill="#f8f060" font-size="11.5" >进</text>
<text x="638" y="670.3" fill="#c040c0" font-size="11.5" >入</text>
<text x="638" y="692" fill="#c8c848" font-size="11.5" >预</text>
<text x="638" y="708" fill="#50e0e0" font-size="11.5" >警[1]</text>
<text x="638" y="724.5" fill="#c8a8a8" font-size="11.5" >区</text>
<rect x="1099.2" y="704" width="198" height="53" rx="5" fill="#ffffff" stroke="#cc1010" stroke-width="2.6"/>
<text x="0" y="0" transform="translate(1111,729.3) scale(1,0.76)" font-size="22.2" textLength="112.5" lengthAdjust="spacing" fill="url(#wg)" style="font-family:'Noto Sans CJK SC',sans-serif;font-weight:300">股市财富网</text>
<text x="1111.5" y="746.8" font-size="11" fill="#e03838" textLength="112" lengthAdjust="spacing" style="font-family:'Liberation Serif',serif">WWW.GSCFW.COM</text>
<rect x="1236.2" y="714" width="53" height="14.6" fill="#b87a9c"/>
<text x="1238" y="725.6" font-size="11.5" fill="#fff" textLength="49.5" lengthAdjust="spacing" style="font-family:'Noto Serif CJK SC',serif;font-weight:bold">指标分享</text>
<rect x="1236.2" y="733" width="53" height="14.6" fill="#8a9ae0"/>
<text x="1238" y="744.6" font-size="11.5" fill="#fff" textLength="49.5" lengthAdjust="spacing" style="font-family:'Noto Serif CJK SC',serif;font-weight:bold">名师课程</text>
</svg></body></html>
